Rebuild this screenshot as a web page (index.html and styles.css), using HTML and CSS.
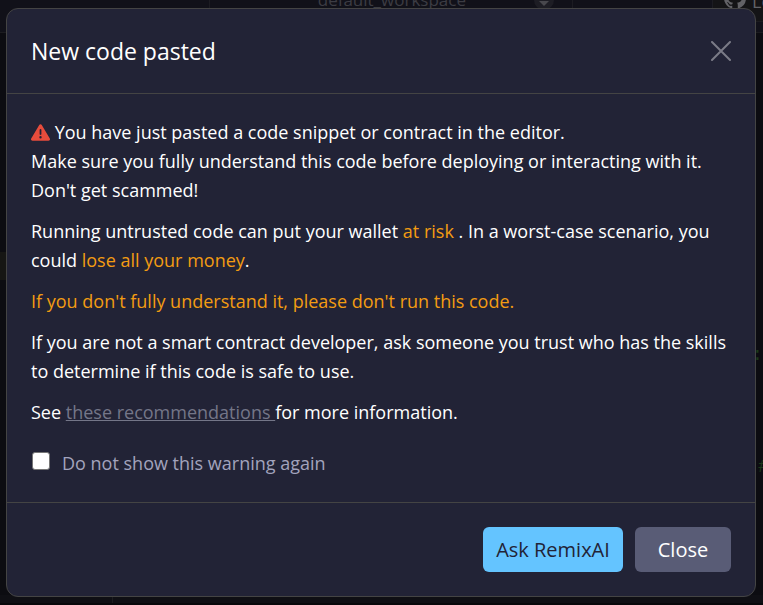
FILE: index.html
```
<!DOCTYPE html>
<html lang="en">
<head>
<meta charset="utf-8">
<meta name="viewport" content="width=device-width, initial-scale=1">
<title>New code pasted</title>
<link rel="stylesheet" href="styles.css">
</head>
<body>
<div class="workspace" aria-hidden="true">
  <div class="topbar">
    <div class="topbar-side"></div>
    <div class="workspace-name">
      <span class="workspace-label">default_workspace</span>
      <svg class="caret" viewBox="0 0 20 20"><circle cx="10" cy="10" r="10" fill="#1d1d24"/><path d="M5 11h10l-5 5z" fill="#48484d"/></svg>
    </div>
    <div class="topbar-gap"></div>
    <div class="login">
      <svg class="github" viewBox="0 0 16 16"><path fill="currentColor" d="M8 0C3.58 0 0 3.58 0 8c0 3.54 2.29 6.53 5.47 7.59.4.07.55-.17.55-.38v-1.49c-2.01.37-2.53-.49-2.69-.94-.09-.23-.48-.94-.82-1.13-.28-.15-.68-.52-.01-.53.63-.01 1.08.58 1.23.82.72 1.21 1.87.87 2.33.66.07-.52.28-.87.51-1.07-1.78-.2-3.64-.89-3.64-3.95 0-.87.31-1.59.82-2.15-.08-.2-.36-1.02.08-2.12 0 0 .67-.21 2.2.82a7.6 7.6 0 0 1 4 0c1.53-1.04 2.2-.82 2.2-.82.44 1.1.16 1.92.08 2.12.51.56.82 1.27.82 2.15 0 3.07-1.87 3.75-3.65 3.95.29.25.54.73.54 1.48v2.2c0 .21.15.46.55.38A8 8 0 0 0 16 8c0-4.42-3.58-8-8-8z"/></svg>
      <span>Login</span>
    </div>
  </div>
  <div class="panes">
    <div class="rail"><div class="rail-item"></div></div>
    <div class="editor"><span class="code">:e</span><span class="code code-mark">#</span></div>
  </div>
  <div class="bottom"><div class="bottom-rail"></div></div>
</div>

<div class="overlay">
  <section class="modal" role="dialog" aria-modal="true" aria-labelledby="modal-title">
    <header class="modal-header">
      <h1 id="modal-title">New code pasted</h1>
      <button class="dismiss" type="button" aria-label="Dismiss">
        <svg viewBox="0 0 20 20"><path d="M1 1l18 18M19 1L1 19" fill="none" stroke="currentColor" stroke-width="2" stroke-linecap="round"/></svg>
      </button>
    </header>
    <div class="modal-body">
      <p><svg class="warning-icon" viewBox="0 0 512 512"><path fill="currentColor" fill-rule="evenodd" d="M256 32c14.200 0 27.300 7.500 34.500 19.800l216 368c7.300 12.400 7.300 27.700.2 40.100S486.300 480 472 480H40c-14.300 0-27.600-7.700-34.700-20.100s-7-27.800.2-40.100l216-368C228.700 39.500 241.800 32 256 32zm0 128c-13.300 0-24 10.700-24 24v112c0 13.300 10.700 24 24 24s24-10.700 24-24V184c0-13.300-10.700-24-24-24zm32 224a32 32 0 1 0-64 0 32 32 0 1 0 64 0z"/></svg> You have just pasted a code snippet or contract in the editor.<br>Make sure you fully understand this code before deploying or interacting with it.<br>Don't get scammed!</p>
      <p>Running untrusted code can put your wallet <span class="caution">at risk</span> . In a worst-case scenario, you could <span class="caution">lose all your money</span>.</p>
      <p class="caution">If you don't fully understand it, please don't run this code.</p>
      <p>If you are not a smart contract developer, ask someone you trust who has the skills to determine if this code is safe to use.</p>
      <p>See <a href="#recommendations">these recommendations </a>for more information.</p>
      <div class="opt-out">
        <input type="checkbox" id="hide-warning">
        <label for="hide-warning">Do not show this warning again</label>
      </div>
    </div>
    <footer class="modal-footer">
      <button class="btn btn-primary" type="button">Ask RemixAI</button>
      <button class="btn btn-secondary" type="button">Close</button>
    </footer>
  </section>
</div>
</body>
</html>
```
FILE: styles.css
```
* {
  box-sizing: border-box;
}

body {
  margin: 0;
  overflow: hidden;
  background: #0c0c11;
  color: #fff;
  font: 18px/29px "Segoe UI", "Open Sans", "Noto Sans", sans-serif;
}

/* Dimmed workspace behind the dialog */
.workspace {
  display: flex;
  flex-direction: column;
  height: 100vh;
  overflow: hidden;
}

.topbar {
  display: flex;
  flex: none;
  height: 33px;
  background: #111119;
  border-bottom: 1px solid #1c1c20;
}

.topbar-side {
  width: 210px;
  border-right: 1px solid #1c1c22;
}

.workspace-name {
  display: flex;
  flex: 1;
  justify-content: flex-end;
  align-items: flex-start;
  gap: 68px;
  padding-right: 18px;
  border-right: 1px solid #1c1c22;
  color: #3c3c43;
  font-size: 17px;
  line-height: 0;
}

.caret {
  width: 20px;
  height: 20px;
  margin-top: -10px;
}

.topbar-gap {
  width: 140px;
  border-right: 1px solid #1c1c22;
}

.login {
  display: flex;
  gap: 6px;
  width: 50px;
  height: 22px;
  padding-left: 11px;
  overflow: hidden;
  background: #141416;
  border-bottom: 1px solid #1c1c20;
  color: #626266;
  line-height: 2px;
}

.github {
  flex: none;
  width: 22px;
  height: 22px;
  margin-top: -13px;
}

.panes {
  display: flex;
  flex: 1;
}

.rail {
  width: 7px;
  padding-top: 219px;
}

.rail-item {
  height: 28px;
  background: #161614;
}

.editor {
  display: flex;
  flex: 1;
  flex-direction: column;
  align-items: flex-end;
  gap: 83px;
  padding-top: 308px;
  overflow: hidden;
}

.code {
  width: 11px;
  color: #1c3a19;
  font-family: "Liberation Mono", monospace;
}

.code-mark {
  width: 5px;
}

.bottom {
  height: 10px;
  background: #0f0f14;
  border-bottom: 2px solid #08080b;
}

.bottom-rail {
  width: 113px;
  height: 8px;
  border-right: 1px solid #1c1c20;
}

/* Dialog */
.overlay {
  position: absolute;
  inset: 0;
  padding: 8px 7px 8px 6px;
}

.modal {
  background: #222336;
  border: 1px solid #444;
  border-radius: 12px;
}

.modal-header {
  display: flex;
  align-items: center;
  justify-content: space-between;
  height: 85px;
  padding: 0 24px;
  border-bottom: 1px solid #444;
}

h1 {
  margin: 0;
  font-size: 23px;
  font-weight: 400;
  line-height: 32px;
}

.dismiss {
  width: 20px;
  height: 20px;
  padding: 0;
  border: 0;
  background: none;
  color: #7b7b87;
}

.dismiss svg {
  display: block;
}

.modal-body {
  padding: 24px;
}

p {
  margin: 0 0 12px;
}

.warning-icon {
  width: 19px;
  height: 19px;
  color: #e74c3c;
  vertical-align: -3px;
}

.caution {
  color: #f39c12;
}

a {
  color: #747688;
}

.opt-out {
  display: flex;
  gap: 12px;
  margin-top: 22px;
  color: #a2a3bd;
}

.opt-out input {
  appearance: none;
  width: 18px;
  height: 18px;
  margin: 3px 0 0 1px;
  background: #fff;
  border: 1px solid #767676;
  border-radius: 3px;
}

.modal-footer {
  display: flex;
  justify-content: flex-end;
  gap: 12px;
  padding: 24px;
  border-top: 1px solid #444;
}

.btn {
  height: 45px;
  padding: 0 13px;
  border: 0;
  border-radius: 6px;
  font: inherit;
  font-size: 20px;
}

.btn-primary {
  min-width: 140px;
  background: #64c4ff;
  color: #222336;
}

.btn-secondary {
  min-width: 96px;
  background: #595c76;
  color: #fff;
}
```
